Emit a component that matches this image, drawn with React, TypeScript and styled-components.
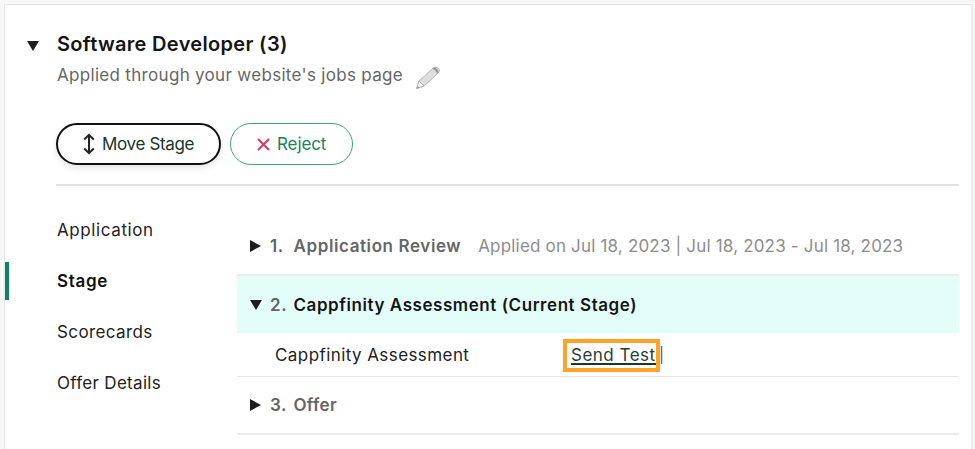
import React from "react";
import styled, { createGlobalStyle, css } from "styled-components";

const GlobalStyle = createGlobalStyle`
  * { box-sizing: border-box; }
  body {
    margin: 0;
    background: #f7f7f7;
    font-family: Inter, "Liberation Sans", sans-serif;
    font-size: 17px;
    color: #222;
    overflow: hidden;
  }
`;

const Page = styled.div`
  height: 449px;
  padding: 4px 2px 0 4px;
`;

const Panel = styled.main`
  height: 445px;
  background: #fff;
  border: 1px solid #e6e6e6;
  border-right: 2px solid #ececec;
  border-bottom: 0;
`;

const Label = styled.span<{ $spacing?: number }>`
  white-space: nowrap;
  letter-spacing: ${(p) => p.$spacing ?? 0}px;
`;

const Header = styled.header`
  display: grid;
  grid-template-columns: 52px 1fr;
  padding-top: 25px;
`;

const HeaderArrow = styled.div`
  padding: 11px 0 0 22px;
  line-height: 0;
`;

const Title = styled.h1`
  margin: 0;
  font-size: 20px;
  line-height: 28px;
  font-weight: 600;
  color: #151515;
`;

const Subtitle = styled.div`
  display: flex;
  align-items: center;
  gap: 13px;
  height: 34px;
  color: #666;
`;

const PencilIcon = styled.svg`
  display: block;
  margin-top: 5px;
`;

const Actions = styled.div`
  display: flex;
  gap: 9px;
  margin: 31px 12px 0 51px;
  padding-bottom: 19px;
  border-bottom: 2px solid #e1e1e1;
`;

const Button = styled.button<{ $kind: "move" | "reject" }>`
  display: flex;
  align-items: center;
  height: 42px;
  padding: 0;
  border-radius: 21px;
  background: #fff;
  font: inherit;
  ${(p) =>
    p.$kind === "move"
      ? css`
          width: 165px;
          padding-left: 25px;
          gap: 7px;
          color: #15372c;
          border: 2px solid #111;
          box-shadow: 0 3px 7px rgba(0, 0, 0, 0.1);
        `
      : css`
          width: 123px;
          padding-left: 26px;
          gap: 7px;
          color: #15845f;
          border: 1px solid #3fa585;
        `}
`;

const Body = styled.div`
  display: grid;
  grid-template-columns: 232px 722px;
`;

const Nav = styled.nav`
  padding-top: 25px;
`;

const NavItem = styled.a<{ $active?: boolean }>`
  display: flex;
  align-items: center;
  height: 38px;
  margin-bottom: 12.9px;
  padding-left: ${(p) => (p.$active ? 48 : 52)}px;
  border-left: ${(p) => (p.$active ? "4px solid #0a8560" : "0")};
  font-weight: ${(p) => (p.$active ? 600 : 400)};
  color: ${(p) => (p.$active ? "#111" : "#222")};
`;

const Stages = styled.section`
  padding-top: 32px;
`;

const StageRow = styled.div<{ $current?: boolean }>`
  display: grid;
  grid-template-columns: 33px 23.5px auto 1fr;
  align-items: center;
  height: ${(p) => (p.$current ? 57 : 58)}px;
  background: ${(p) => (p.$current ? "#e3fef8" : "#fff")};
  border-bottom: ${(p) => (p.$current ? "0" : "2px solid #ebebeb")};
  font-weight: 600;
  color: ${(p) => (p.$current ? "#151515" : "#666")};
`;

const StageArrow = styled.span`
  padding-left: 13px;
  line-height: 0;
`;

const StageNumber = styled.span`
  color: #5f6462;
  letter-spacing: 0.6px;
`;

const StageDates = styled.span`
  margin-left: 17px;
  font-weight: 400;
  color: #8d8d8d;
`;

const TaskRow = styled.div`
  display: grid;
  grid-template-columns: 288px auto 1fr;
  align-items: center;
  height: 44px;
  padding-left: 38px;
  border-bottom: 1px solid #e5e5e5;
`;

const Highlight = styled.span`
  display: flex;
  align-items: center;
  width: 97px;
  height: 33px;
  margin-top: 1px;
  padding-left: 4px;
  border: 4px solid #ffa329;
`;

const TestLink = styled.a`
  height: 19px;
  line-height: 19px;
  color: #223f35;
  border-bottom: 2px solid #15372c;
`;

const Divider = styled.span`
  color: #4a4a72;
  font-size: 15px;
  margin-left: -1px;
`;

const DownArrow = () => (
  <svg width="12" height="10" viewBox="0 0 12 10">
    <path d="M0 0H12L6 10Z" fill="#1d1d1d" />
  </svg>
);

const RightArrow = () => (
  <svg width="11" height="12" viewBox="0 0 11 12">
    <path d="M0 0L11 6L0 12Z" fill="#1d1d1d" />
  </svg>
);

const Pencil = () => (
  <PencilIcon width="24" height="24" viewBox="0 0 24 24">
    <path d="M3 15L17 2.2Q20-.2 22.6 2.3Q24.8 5 22 7.2L8 20L.8 22.4Z" fill="#dedede" stroke="#b5b5b5" strokeWidth="1" strokeLinejoin="round" />
    <path d="M3 15L8 20L.8 22.4Z" fill="#fafafa" stroke="#b5b5b5" strokeWidth="1" />
    <path d="M16.5 2.7L18.4 1.2Q21.9 2.8 22.6 6.3L21 7.7Q20.2 4.2 16.5 2.7Z" fill="#999" />
    <path d="M.5 22.7L1.5 19.9L3.4 21.8Z" fill="#999" />
  </PencilIcon>
);

const MoveIcon = () => (
  <svg width="12" height="22" viewBox="0 0 12 22" fill="none" stroke="#222" strokeWidth="2">
    <path d="M6 2V20M1.2 6.5L6 1.8L10.8 6.5M1.2 15.5L6 20.2L10.8 15.5" />
  </svg>
);

const RejectIcon = () => (
  <svg width="13" height="13" viewBox="0 0 13 13" fill="none" stroke="#e0365d" strokeWidth="2">
    <path d="M1 1L12 12M12 1L1 12" />
  </svg>
);

const navItems = [
  { text: "Application", spacing: 0.6 },
  { text: "Stage", spacing: 0.7, active: true },
  { text: "Scorecards", spacing: 0.38 },
  { text: "Offer Details", spacing: 0.3 },
];

export default function App() {
  return (
    <Page>
      <GlobalStyle />
      <Panel>
        <Header>
          <HeaderArrow><DownArrow /></HeaderArrow>
          <div>
            <Title><Label $spacing={0.32}>Software Developer (3)</Label></Title>
            <Subtitle>
              <Label $spacing={0.31}>Applied through your website's jobs page</Label>
              <Pencil />
            </Subtitle>
          </div>
        </Header>
        <Actions>
          <Button $kind="move"><MoveIcon /><Label $spacing={-0.35}>Move Stage</Label></Button>
          <Button $kind="reject"><RejectIcon /><Label $spacing={-0.1}>Reject</Label></Button>
        </Actions>
        <Body>
          <Nav>
            {navItems.map((item) => (
              <NavItem key={item.text} $active={item.active}>
                <Label $spacing={item.spacing}>{item.text}</Label>
              </NavItem>
            ))}
          </Nav>
          <Stages>
            <StageRow>
              <StageArrow><RightArrow /></StageArrow>
              <StageNumber>1.</StageNumber>
              <Label $spacing={0.6}>Application Review</Label>
              <StageDates><Label $spacing={0.18}>Applied on Jul 18, 2023 | Jul 18, 2023 - Jul 18, 2023</Label></StageDates>
            </StageRow>
            <StageRow $current>
              <StageArrow><DownArrow /></StageArrow>
              <StageNumber>2.</StageNumber>
              <Label $spacing={0.56}>Cappfinity Assessment (Current Stage)</Label>
            </StageRow>
            <TaskRow>
              <Label $spacing={0.42}>Cappfinity Assessment</Label>
              <Highlight><TestLink><Label $spacing={0.5}>Send Test</Label></TestLink></Highlight>
              <Divider>|</Divider>
            </TaskRow>
            <StageRow>
              <StageArrow><RightArrow /></StageArrow>
              <StageNumber>3.</StageNumber>
              <Label $spacing={0.3}>Offer</Label>
            </StageRow>
          </Stages>
        </Body>
      </Panel>
    </Page>
  );
}
